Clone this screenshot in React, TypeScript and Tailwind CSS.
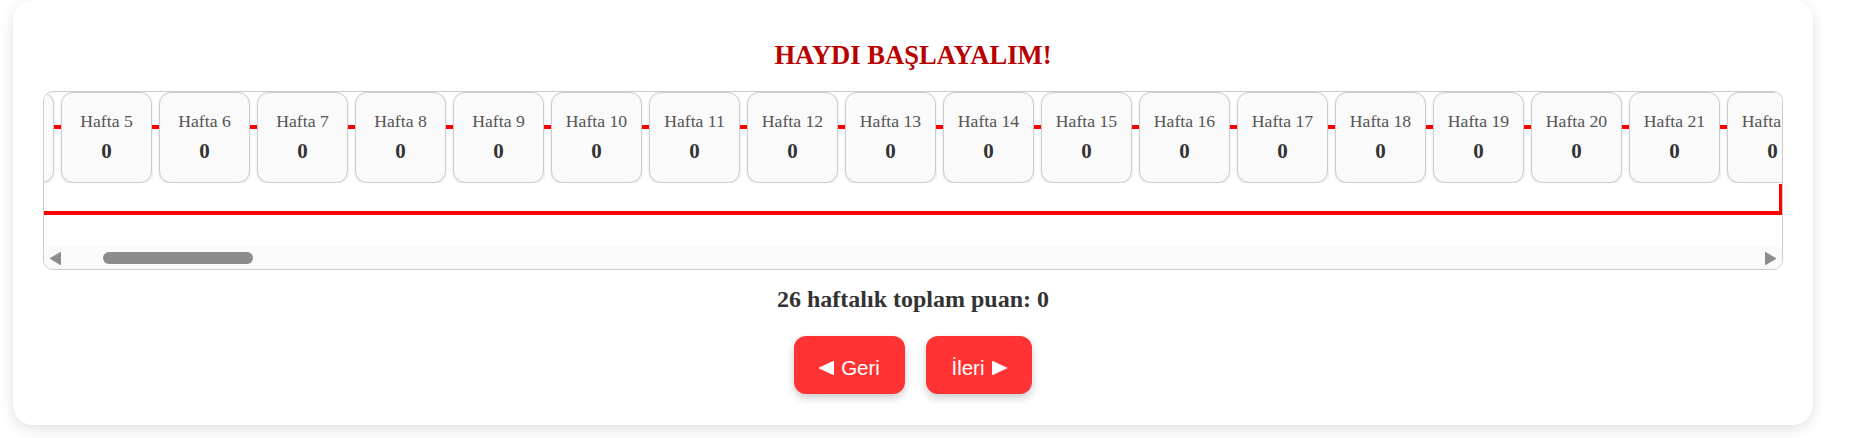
import React from "react";

const serif = "font-['Liberation_Serif','Times_New_Roman',serif]";
const sans = "font-['Liberation_Sans',Arial,sans-serif]";

function Card({ n }: { n: number }) {
  return (
    <div className="w-[91px] h-[91px] shrink-0 border border-[#cccccc] rounded-[12px] bg-[#fafafa] shadow-[0_1px_3px_rgba(0,0,0,0.12)] flex flex-col items-center pt-[18px]">
      <div className={`${serif} text-[17.7px] leading-[20px] text-[#555555] whitespace-nowrap`}>Hafta {n}</div>
      <div className={`${serif} text-[21px] leading-[24px] font-bold text-[#333333] mt-[8px]`}>0</div>
    </div>
  );
}

function Row() {
  const items: React.ReactNode[] = [];
  for (let i = 1; i <= 26; i++) {
    if (i > 1) {
      items.push(<div key={`c${i}`} className="w-[7px] h-[4px] mt-[33px] shrink-0 bg-[#ff0000]" />);
    }
    items.push(<Card key={i} n={i} />);
  }
  return <div className="flex items-start ml-[-375px] w-max">{items}</div>;
}

function TriLeft({ color = "#8c8c8c", w = 11, h = 13 }: { color?: string; w?: number; h?: number }) {
  return (
    <svg width={w} height={h} viewBox={`0 0 ${w} ${h}`} className="block shrink-0">
      <polygon points={`0,${h / 2} ${w},0 ${w},${h}`} fill={color} strokeLinejoin="round" stroke={color} strokeWidth="0.8" />
    </svg>
  );
}

function TriRight({ color = "#8c8c8c", w = 11, h = 13 }: { color?: string; w?: number; h?: number }) {
  return (
    <svg width={w} height={h} viewBox={`0 0 ${w} ${h}`} className="block shrink-0">
      <polygon points={`0,0 ${w},${h / 2} 0,${h}`} fill={color} strokeLinejoin="round" stroke={color} strokeWidth="0.8" />
    </svg>
  );
}

export default function App() {
  return (
    <div className="w-[1869px] h-[438px] bg-white overflow-hidden">
      <div className="ml-[13px] w-[1800px] h-[425px] rounded-[20px] bg-white shadow-[0_4px_14px_rgba(0,0,0,0.12)] pt-[40px] px-[30px] flex flex-col items-center">
        <h2 className={`${serif} font-bold text-[26.6px] leading-[30px] text-[#b80000]`}>HAYDI BAŞLAYALIM!</h2>

        <div className="mt-[21px] w-full border border-[#cccccc] rounded-[10px] overflow-hidden flex flex-col bg-white">
          <div className="overflow-hidden">
            <Row />
          </div>
          <div className="mt-[1px] h-[31px] border-b-4 border-r-[3px] border-[#ff0000]" />
          <div className="mt-[32px] h-[22px] bg-[#fafafa] flex items-center px-[6px]">
            <TriLeft />
            <div className="ml-[42px] w-[150px] h-[12px] rounded-full bg-[#8c8c8c]" />
            <div className="flex-1" />
            <TriRight />
          </div>
        </div>

        <div className={`${serif} mt-[15px] font-bold text-[24px] leading-[28px] text-[#333333]`}>26 haftalık toplam puan: 0</div>

        <div className="mt-[23px] flex gap-[21px]">
          <button className={`${sans} w-[111px] h-[58px] pt-[6px] rounded-[12px] bg-[#ff3333] text-white text-[20.5px] shadow-[0_4px_8px_rgba(0,0,0,0.2)] flex items-center justify-center gap-[7px]`}>
            <TriLeft color="#ffffff" w={15} h={14} />
            <span>Geri</span>
          </button>
          <button className={`${sans} w-[106px] h-[58px] pt-[6px] rounded-[12px] bg-[#ff3333] text-white text-[20.5px] shadow-[0_4px_8px_rgba(0,0,0,0.2)] flex items-center justify-center gap-[7px]`}>
            <span>İleri</span>
            <TriRight color="#ffffff" w={15} h={14} />
          </button>
        </div>
      </div>
    </div>
  );
}
